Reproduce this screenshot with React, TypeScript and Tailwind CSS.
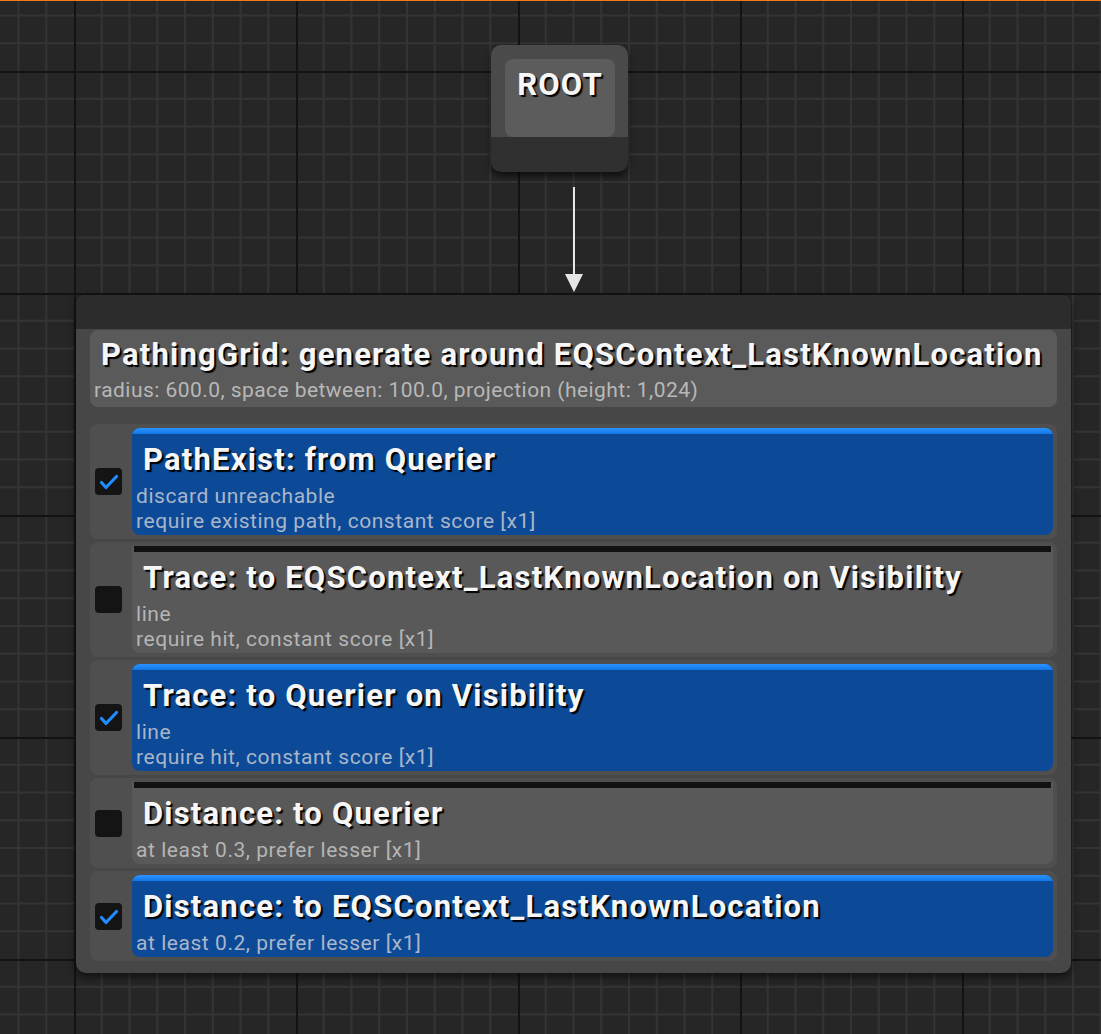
import React from "react";

type EqsTest = {
  title: string;
  lines: string[];
  enabled: boolean;
};

const GENERATOR = {
  title: "PathingGrid: generate around EQSContext_LastKnownLocation",
  detail: "radius: 600.0, space between: 100.0, projection (height: 1,024)",
};

const TESTS: EqsTest[] = [
  {
    title: "PathExist: from Querier",
    lines: ["discard unreachable", "require existing path, constant score [x1]"],
    enabled: true,
  },
  {
    title: "Trace: to EQSContext_LastKnownLocation on Visibility",
    lines: ["line", "require hit, constant score [x1]"],
    enabled: false,
  },
  {
    title: "Trace: to Querier on Visibility",
    lines: ["line", "require hit, constant score [x1]"],
    enabled: true,
  },
  {
    title: "Distance: to Querier",
    lines: ["at least 0.3, prefer lesser [x1]"],
    enabled: false,
  },
  {
    title: "Distance: to EQSContext_LastKnownLocation",
    lines: ["at least 0.2, prefer lesser [x1]"],
    enabled: true,
  },
];

const MINOR = [1, 2, 3, 4, 5, 6, 7].map((k) => k * 27.75);

// Graph editor background: minor cells every 27.75px, a major line every 8 cells
function GridBackground() {
  return (
    <svg className="absolute inset-0" width="1101" height="1034">
      <defs>
        <pattern id="graph-grid" patternUnits="userSpaceOnUse" x="74" y="71" width="222" height="222">
          <rect width="222" height="222" fill="#262626" />
          {MINOR.map((p) => (
            <g key={p} fill="#343434">
              <rect x={p - 1} y="0" width="2" height="222" />
              <rect x="0" y={p - 1} width="222" height="2" />
            </g>
          ))}
          <g fill="#131313">
            <rect x="0" y="0" width="2" height="222" />
            <rect x="0" y="0" width="222" height="2" />
          </g>
        </pattern>
      </defs>
      <rect width="1101" height="1034" fill="url(#graph-grid)" />
    </svg>
  );
}

function CheckBox({ checked }: { checked: boolean }) {
  return (
    <div className="w-[27px] h-[27px] shrink-0 rounded-[4px] bg-[#141414]">
      {checked && (
        <svg width="27" height="27" viewBox="0 0 27 27">
          <path d="M6.5 14.5 L11 19.5 L21.5 8.5" fill="none" stroke="#1f8cff" strokeWidth="3.2" strokeLinecap="round" strokeLinejoin="round" />
        </svg>
      )}
    </div>
  );
}

const titleCls =
  "pl-[7px] text-[31px] leading-[40px] tracking-[1.2px] font-bold text-[#f6f6f6] whitespace-nowrap [text-shadow:2px_2px_1px_#000]";
const detailCls = "text-[21px] leading-[25px] whitespace-nowrap";

function TestRow({ test }: { test: EqsTest }) {
  const sub = test.enabled ? "text-[#a9b6c9]" : "text-[#b5b5b5]";
  return (
    <div className="flex items-center gap-[10px] rounded-[8px] bg-[#4f4f4f] py-[4px] pl-[5px] pr-[4px]">
      <CheckBox checked={test.enabled} />
      <div
        className={
          test.enabled
            ? "flex-1 overflow-hidden rounded-[8px] bg-[#0c4a98]"
            : "flex-1 overflow-hidden rounded-b-[8px] bg-[#595959]"
        }
      >
        <div
          className={
            test.enabled
              ? "h-[6px] bg-gradient-to-b from-[#2a93ff] to-[#1277e6]"
              : "h-[6px] mx-[2px] bg-[#111]"
          }
        />
        <div className="px-[4px] pt-[6px] pb-[1px]">
          <div className={titleCls}>{test.title}</div>
          <div className={`mt-[4px] tracking-[0.55px] ${detailCls} ${sub}`}>
            {test.lines.map((l) => (
              <div key={l}>{l}</div>
            ))}
          </div>
        </div>
      </div>
    </div>
  );
}

export default function App() {
  return (
    <div className="relative w-[1101px] h-[1034px] overflow-hidden bg-[#262626] font-['Roboto',sans-serif]">
      <GridBackground />
      <div className="absolute left-0 top-0 w-full h-px bg-[#f07a1e]" />

      {/* ROOT node */}
      <div className="absolute left-[491px] top-[45px] w-[137px] h-[127px] rounded-[10px] bg-[#303030] overflow-hidden shadow-[0_4px_6px_rgba(0,0,0,0.6)]">
        <div className="h-[92px] bg-[#4a4a4a] pl-[14px] pr-[13px] pt-[14px]">
          <div className="h-[78px] rounded-[8px] bg-[#5c5c5c] pt-[6px] text-center text-[31px] leading-[40px] tracking-[1.2px] font-bold text-[#f6f6f6] [text-shadow:2px_2px_1px_#000]">
            ROOT
          </div>
        </div>
      </div>

      {/* link ROOT -> query */}
      <svg className="absolute left-[560px] top-[185px]" width="28" height="110">
        <line x1="14" y1="2" x2="14" y2="92" stroke="#e6e6e6" strokeWidth="2" />
        <path d="M5 89 L23 89 L14 107 Z" fill="#e6e6e6" />
      </svg>

      {/* query node */}
      <div className="absolute left-[76px] top-[295px] w-[995px] rounded-[10px] bg-[#474747] shadow-[0_4px_8px_rgba(0,0,0,0.55)]">
        <div className="h-[34px] rounded-t-[10px] bg-[#2c2c2c]" />
        <div className="px-[14px] pt-px pb-[12px]">
          <div className="rounded-[8px] bg-[#5a5a5a] px-[4px] pt-[5px] pb-[4px]">
            <div className={titleCls}>{GENERATOR.title}</div>
            <div className={`mt-[3px] tracking-[0.45px] ${detailCls} text-[#b8b8b8]`}>{GENERATOR.detail}</div>
          </div>
          <div className="mt-[17px] flex flex-col gap-[3px]">
            {TESTS.map((t) => (
              <TestRow key={t.title} test={t} />
            ))}
          </div>
        </div>
      </div>
    </div>
  );
}
